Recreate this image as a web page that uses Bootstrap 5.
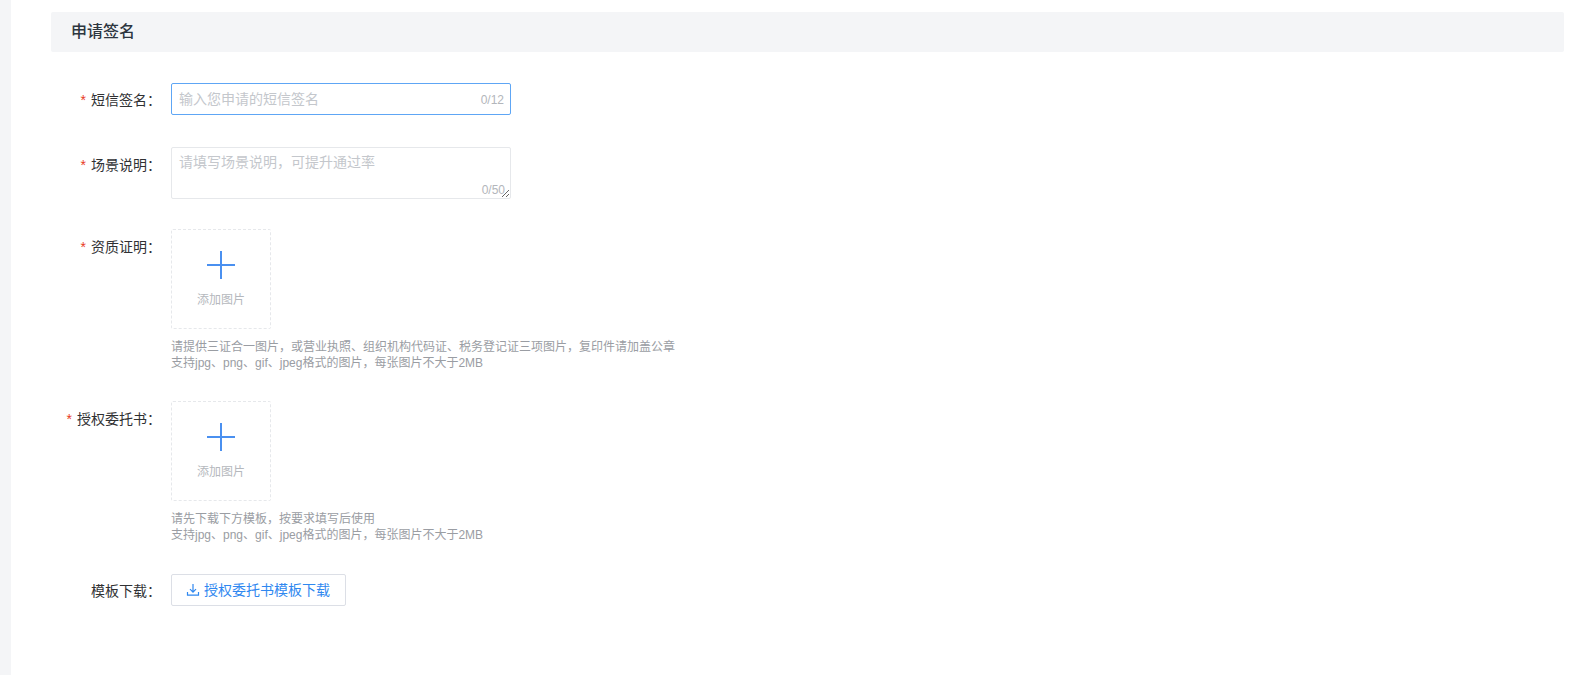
<!doctype html>
<html lang="zh">
<head>
<meta charset="utf-8">
<title>申请签名</title>
<link rel="stylesheet" href="https://cdn.jsdelivr.net/npm/bootstrap@5.3.0/dist/css/bootstrap.min.css">
<style>
html,body{height:100%}
body{background:#fff;font-family:"Liberation Sans","Noto Sans CJK SC",sans-serif;font-size:14px;color:#303133;overflow:hidden}
.shell{height:675px;border-left:11px solid #f4f5f7;padding:12px 11px 0 40px}
.title-bar{height:40px;background:#f4f5f7;padding-left:20px;font-size:16px;font-weight:500;color:#2d3640;line-height:40px;border-radius:2px}
.sign-form{padding-top:31px}
.form-line{margin-bottom:31px}
.form-line.tight{margin-bottom:30px}
.form-line.near{margin-bottom:30px}
.form-line.near-last{margin-bottom:31px}
.lbl{width:120px;flex:none;padding-right:10px;padding-top:1px;text-align:right;line-height:32px;color:#303133;white-space:nowrap}
.lbl.lower{padding-top:2px}
.req{color:#e8391d;margin-right:5px;font-size:14px}
.field-wrap{width:340px}
.field-wrap.short{height:32px}
.sign-input,.sign-area{border-radius:2px;font-size:14px;padding:0 40px 0 7px;color:#606266;box-shadow:none}
.sign-input{height:32px;line-height:30px;border:1px solid #5ea6f5}
.sign-input:focus,.sign-area:focus{border-color:#5ea6f5;box-shadow:none}
.sign-area{height:52px;min-height:52px;border:1px solid #e6e8eb;padding-top:4px;line-height:20px}
.sign-input::placeholder,.sign-area::placeholder{color:#c4c7cc;opacity:1}
.counter{position:absolute;right:7px;bottom:0;font-size:12px;line-height:30px;color:#b3b6bb}
.counter.in-area{bottom:-1px;line-height:20px;right:6px}
.uploader{width:100px;height:100px;border:1px dashed #e6e8eb;border-radius:2px;color:#b5b8bd;font-size:12px;padding-top:20px}
.uploader svg{display:block;margin-bottom:11px}
.hint{margin-top:10px;font-size:12px;line-height:16px;color:#9a9da3}
.dl-btn{height:32px;width:175px;border:1px solid #dcdfe6;border-radius:2px;background:#fff;color:#2f88f0;font-size:14px;padding:0 1px 0 0;line-height:30px}
.dl-btn:hover{background:#fff;color:#2f88f0;border-color:#dcdfe6}
</style>
</head>
<body>
<div class="shell">
  <div class="title-bar">申请签名</div>
  <form class="sign-form">
    <div class="d-flex form-line">
      <label class="lbl"><span class="req">*</span>短信签名：</label>
      <div class="field-wrap short position-relative">
        <input class="form-control sign-input" placeholder="输入您申请的短信签名">
        <span class="counter">0/12</span>
      </div>
    </div>
    <div class="d-flex form-line tight">
      <label class="lbl lower"><span class="req">*</span>场景说明：</label>
      <div class="field-wrap position-relative d-flex">
        <textarea class="form-control sign-area" placeholder="请填写场景说明，可提升通过率"></textarea>
        <span class="counter in-area">0/50</span>
      </div>
    </div>
    <div class="d-flex form-line near">
      <label class="lbl lower"><span class="req">*</span>资质证明：</label>
      <div>
        <div class="uploader d-flex flex-column align-items-center">
          <svg width="30" height="30" viewBox="0 0 30 30" fill="none" stroke="#4a90f0" stroke-width="2"><path d="M15 1v28M1 15h28"/></svg>
          <span>添加图片</span>
        </div>
        <div class="hint">请提供三证合一图片，或营业执照、组织机构代码证、税务登记证三项图片，复印件请加盖公章<br>支持jpg、png、gif、jpeg格式的图片，每张图片不大于2MB</div>
      </div>
    </div>
    <div class="d-flex form-line near-last">
      <label class="lbl lower"><span class="req">*</span>授权委托书：</label>
      <div>
        <div class="uploader d-flex flex-column align-items-center">
          <svg width="30" height="30" viewBox="0 0 30 30" fill="none" stroke="#4a90f0" stroke-width="2"><path d="M15 1v28M1 15h28"/></svg>
          <span>添加图片</span>
        </div>
        <div class="hint">请先下载下方模板，按要求填写后使用<br>支持jpg、png、gif、jpeg格式的图片，每张图片不大于2MB</div>
      </div>
    </div>
    <div class="d-flex align-items-start">
      <label class="lbl">模板下载：</label>
      <button type="button" class="btn dl-btn d-inline-flex align-items-center justify-content-center gap-1">
        <svg width="14" height="14" viewBox="0 0 14 14" fill="none" stroke="#2f88f0" stroke-width="1.2"><path d="M7 1v8M4 6.2 7 9.2l3-3M1.5 9v3.2h11V9"/></svg>
        <span>授权委托书模板下载</span>
      </button>
    </div>
  </form>
</div>
<script src="https://cdn.jsdelivr.net/npm/bootstrap@5.3.0/dist/js/bootstrap.bundle.min.js"></script>
</body>
</html>
